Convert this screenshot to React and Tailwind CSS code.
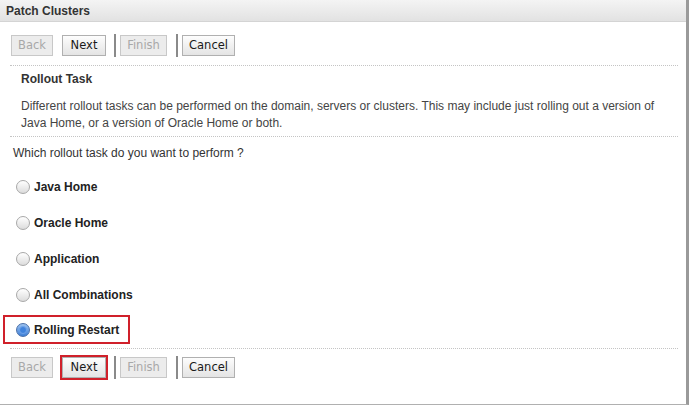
import React from "react";

function Btn({ label, disabled, highlight }) {
  return (
    <div className={highlight ? "border-2 border-[#d0202a] p-0" : "border-2 border-transparent"}>
      <div
        className={
          "h-[21px] flex items-center justify-center border text-[11.5px] leading-none " +
          (disabled
            ? "border-[#c8c8c8] bg-[#ececec] text-[#a8a8a8]"
            : "border-[#b0b0b0] bg-gradient-to-b from-[#fdfdfd] to-[#e4e4e4] text-[#1a1a1a]")
        }
        style={{ fontFamily: '"DejaVu Sans", sans-serif' }}
      >
        <span className="px-[9px]">{label}</span>
      </div>
    </div>
  );
}

function Toolbar({ highlightNext }) {
  return (
    <div className="flex items-center h-[23px] pl-[9px]">
      <div className="w-[46px]"><Btn label="Back" disabled /></div>
      <div className="w-[48px] ml-[5px]"><Btn label="Next" highlight={highlightNext} /></div>
      <div className="w-[2px] h-[23px] bg-[#8a8a8a] ml-[6px]" />
      <div className="w-[51px] ml-[2px]"><Btn label="Finish" disabled /></div>
      <div className="w-[2px] h-[23px] bg-[#8a8a8a] ml-[7px]" />
      <div className="w-[57px] ml-[2px]"><Btn label="Cancel" /></div>
    </div>
  );
}

function Dotted() {
  return <div className="ml-[10px] mr-[8px] border-t border-dotted border-[#c4c4c4]" />;
}

function Radio({ label, checked }) {
  return (
    <div className="flex items-center gap-[4px]">
      <div
        className={
          "w-[14px] h-[14px] rounded-full border flex items-center justify-center " +
          (checked
            ? "border-[#4a6fa8] bg-gradient-to-b from-[#9cc2f0] to-[#3d7fd6]"
            : "border-[#a8a8a8] bg-gradient-to-b from-[#ffffff] to-[#dcdcdc]")
        }
      >
        {checked && <div className="w-[8px] h-[8px] rounded-full bg-[#3f82dc] border border-[#6fa2e8]" />}
      </div>
      <span className="font-bold text-[12px] text-[#222]">{label}</span>
    </div>
  );
}

export default function App() {
  return (
    <div
      className="w-[689px] h-[405px] bg-white relative overflow-hidden border-r-[3px] border-[#9a9a9a] border-b border-b-[#b0b0b0]"
      style={{ fontFamily: '"Liberation Sans", Arial, sans-serif' }}
    >
      <div className="h-[22px] bg-gradient-to-b from-[#f4f4f4] to-[#e2e2e2] flex items-center pl-[6px] border-b border-[#d4d4d4]">
        <span className="font-bold text-[12px] text-[#333]">Patch Clusters</span>
      </div>
      <div className="pt-[12px]">
        <Toolbar />
      </div>
      <div className="mt-[8px]"><Dotted /></div>
      <div className="pl-[21px] pt-[6px] text-[#333]">
        <div className="font-bold text-[12px] h-[14px] leading-[14px]">Rollout Task</div>
        <div className="mt-[12px] text-[12px] leading-[17px] pr-[20px] text-[#444]">
          Different rollout tasks can be performed on the domain, servers or clusters. This may include just rolling out a version of Java Home, or a version of Oracle Home or both.
        </div>
      </div>
      <div className="mt-[4px]"><Dotted /></div>
      <div className="pl-[13px] mt-[9px] text-[12px] text-[#333] leading-[14px]">Which rollout task do you want to perform ?</div>
      <div className="pl-[16px] mt-[20px] flex flex-col gap-[22px]">
        <div className="h-[14px] flex items-center"><Radio label="Java Home" /></div>
        <div className="h-[14px] flex items-center"><Radio label="Oracle Home" /></div>
        <div className="h-[14px] flex items-center"><Radio label="Application" /></div>
        <div className="h-[14px] flex items-center"><Radio label="All Combinations" /></div>
      </div>
      <div className="ml-[3px] mt-[13px] w-[127px] h-[29px] border-2 border-[#d0202a] flex items-center pl-[11px]">
        <Radio label="Rolling Restart" checked />
      </div>
      <div className="mt-[4px]"><Dotted /></div>
      <div className="mt-[7px]">
        <Toolbar highlightNext />
      </div>
    </div>
  );
}
